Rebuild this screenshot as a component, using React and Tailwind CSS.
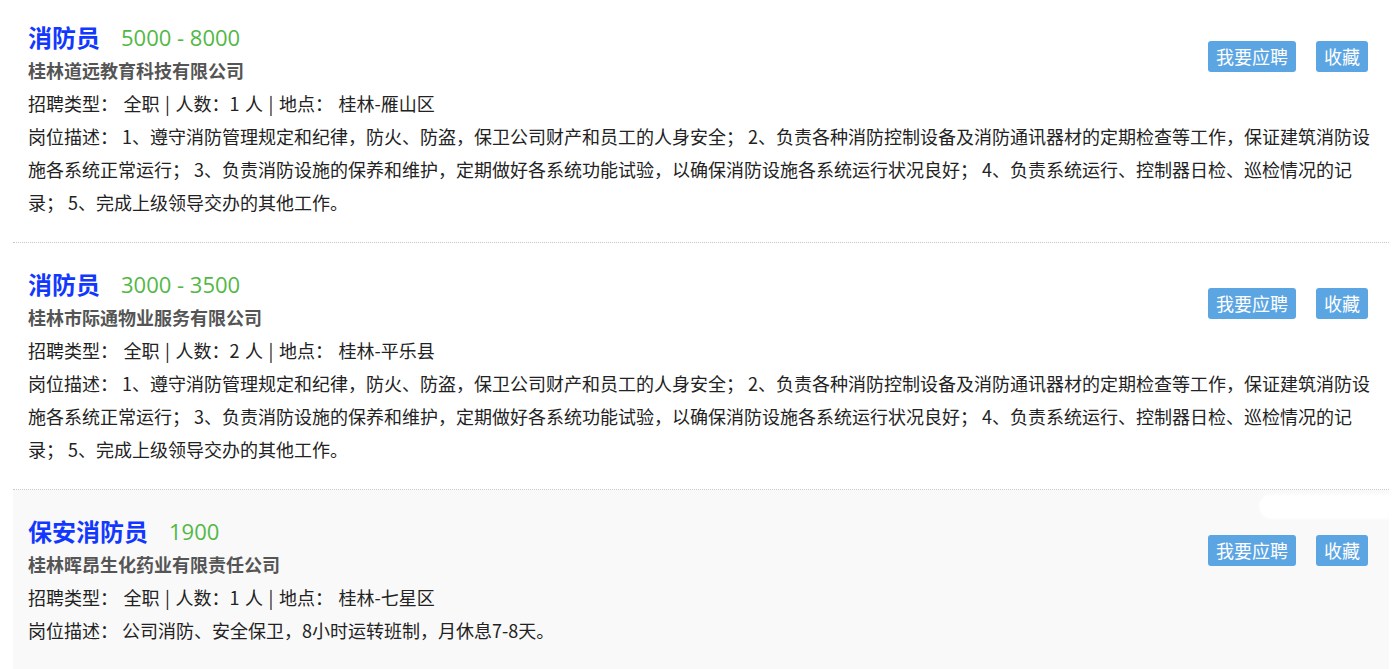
import React from 'react';

const jobs = [
  {
    title: '消防员',
    salary: '5000 - 8000',
    company: '桂林道远教育科技有限公司',
    count: 1,
    place: '桂林-雁山区',
    desc: '1、遵守消防管理规定和纪律，防火、防盗，保卫公司财产和员工的人身安全； 2、负责各种消防控制设备及消防通讯器材的定期检查等工作，保证建筑消防设施各系统正常运行； 3、负责消防设施的保养和维护，定期做好各系统功能试验，以确保消防设施各系统运行状况良好； 4、负责系统运行、控制器日检、巡检情况的记录； 5、完成上级领导交办的其他工作。',
  },
  {
    title: '消防员',
    salary: '3000 - 3500',
    company: '桂林市际通物业服务有限公司',
    count: 2,
    place: '桂林-平乐县',
    desc: '1、遵守消防管理规定和纪律，防火、防盗，保卫公司财产和员工的人身安全； 2、负责各种消防控制设备及消防通讯器材的定期检查等工作，保证建筑消防设施各系统正常运行； 3、负责消防设施的保养和维护，定期做好各系统功能试验，以确保消防设施各系统运行状况良好； 4、负责系统运行、控制器日检、巡检情况的记录； 5、完成上级领导交办的其他工作。',
  },
  {
    title: '保安消防员',
    salary: '1900',
    company: '桂林晖昂生化药业有限责任公司',
    count: 1,
    place: '桂林-七星区',
    desc: '公司消防、安全保卫，8小时运转班制，月休息7-8天。',
    active: true,
  },
];

const JobItem = ({ job }) => {
  return (
    <div
      className={`relative border-b border-dotted border-[#c8c8c8] pl-[15px] pr-[12px] pt-[24px] pb-[23px] ${
        job.active ? 'bg-[#f9f9f9]' : 'bg-white'
      }`}
    >
      {job.active && (
        <div className="absolute right-0 top-[4px] h-[25px] w-[130px] rounded-l-full bg-white blur-[1px]" />
      )}

      {/* Actions */}
      <div className="relative float-right mr-[9px] mt-[21px] flex gap-5">
        <button className="h-[31px] rounded-[3px] bg-[#5ca5e3] px-[8px] text-[18px] leading-[31px] text-white">
          我要应聘
        </button>
        <button className="h-[31px] rounded-[3px] bg-[#5ca5e3] px-[8px] text-[18px] leading-[31px] text-white">
          收藏
        </button>
      </div>

      {/* Title */}
      <div className="flex h-[34px] items-center">
        <span className="text-[24px] font-bold text-[#1238ff]">{job.title}</span>
        <span className="ml-[21px] font-['Open_Sans',sans-serif] text-[22px] text-[#52b845]">{job.salary}</span>
      </div>
      <p className="h-[33px] text-[18px] font-bold leading-[33px] text-[#555]">{job.company}</p>
      <p className="h-[33px] text-[18px] leading-[33px] text-[#222] [word-spacing:1.5px]">
        招聘类型： 全职 | 人数：{job.count} 人 | 地点： {job.place}
      </p>
      <p className="text-[18px] leading-[33px] text-[#222]">岗位描述： {job.desc}</p>
    </div>
  );
};

const App = () => {
  return (
    <div className="min-h-screen overflow-hidden bg-white font-['Noto_Sans_CJK_SC',sans-serif]">
      <div className="-mt-1 ml-[13px] mr-[10px]">
        {jobs.map((job, i) => (
          <JobItem key={i} job={job} />
        ))}
      </div>
    </div>
  );
};

export default App;
